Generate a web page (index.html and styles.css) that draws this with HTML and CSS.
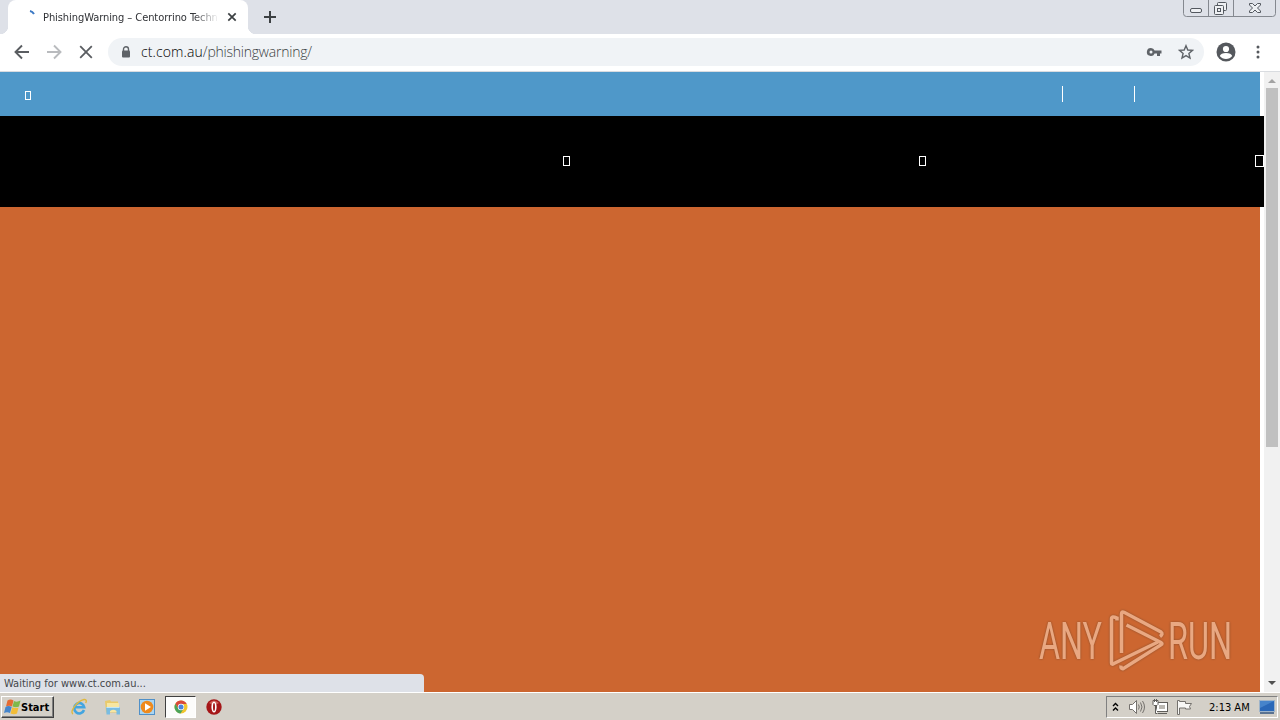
FILE: index.html
```html
<!DOCTYPE html>
<html lang="en">
<head>
  <meta charset="utf-8">
  <title>PhishingWarning – Centorrino Technologies</title>
  <link rel="stylesheet" href="styles.css">
</head>
<body>
  <div class="desktop">

    <div class="tabstrip">
      <div class="prev-tab"></div>
      <div class="tab">
        <svg class="spinner" width="16" height="16" viewBox="0 0 16 16"><path d="M3 3Q5.500 3.500 7 6" fill="none" stroke="#3b78c4" stroke-width="2"/></svg>
        <span class="tab-title">PhishingWarning – Centorrino Techn</span>
        <svg class="tab-close" width="10" height="10" viewBox="0 0 10 10"><path d="M1.300 1.300l7.400 7.400M8.700 1.300L1.300 8.700" stroke="#3c4043" stroke-width="1.700"/></svg>
      </div>
      <svg class="new-tab" width="12" height="12" viewBox="0 0 12 12"><path d="M6 0v12M0 6h12" stroke="#3c4043" stroke-width="2"/></svg>
      <svg class="window-buttons" width="94" height="18" viewBox="0 0 94 18">
        <path d="M.5 0v13.500q0 3 3 3h86q3 0 3-3V0M25.500 0v16.500M50.500 0v16.500" fill="none" stroke="#84888f"/>
        <g fill="#eef0f3" stroke="#53585f">
          <rect x="7.500" y="8.500" width="11" height="4" rx="1.500"/>
          <rect x="34.500" y="2.500" width="9" height="8" rx="1"/>
          <rect x="31.500" y="5.500" width="9" height="9" rx="1"/>
          <rect x="34.500" y="8.500" width="3" height="3"/>
          <path d="M66.500 3.500h3l2.500 2.500 2.500-2.500h3v1.500l-3 3 3 3v1.500h-3L72 10l-2.500 2.500h-3V11l3-3-3-3z"/>
        </g>
      </svg>
    </div>

    <div class="toolbar">
      <svg class="nav-icon" width="16" height="16" viewBox="0 0 16 16"><path d="M15 8H2M8 1.500L1.500 8 8 14.500" fill="none" stroke="#5a5d61" stroke-width="1.900"/></svg>
      <svg class="nav-icon" width="16" height="16" viewBox="0 0 16 16"><path d="M1 8h13M8 1.500L14.500 8 8 14.500" fill="none" stroke="#b9bbbe" stroke-width="1.900"/></svg>
      <svg class="nav-icon" width="16" height="16" viewBox="0 0 16 16"><path d="M2.200 2.200l11.600 11.600M13.800 2.200L2.200 13.800" stroke="#5a5d61" stroke-width="1.800"/></svg>
      <div class="omnibox">
        <svg class="lock" width="10" height="12" viewBox="0 0 10 12"><path d="M2.500 5V3.200a2.500 2.500 0 0 1 5 0V5" fill="none" stroke="#5f6368" stroke-width="1.400"/><rect x="1" y="4.500" width="8" height="7" rx="1" fill="#5f6368"/></svg>
        <span class="url"><span class="url-host">ct.com.au</span>/phishingwarning/</span>
        <svg class="key" width="16" height="10" viewBox="0 0 16 10"><path d="M5 1a4 4 0 1 0 3.600 5.400H11V9h3V6.400h1.500V3.600H8.600A4 4 0 0 0 5 1zm0 2.500a1.500 1.500 0 1 1 0 3 1.500 1.500 0 0 1 0-3z" fill="#5f6368" fill-rule="evenodd"/></svg>
        <svg class="star" width="16" height="16" viewBox="0 0 16 16"><path d="M8 1.700l1.800 4.300 4.700.4-3.600 3.100 1.100 4.600-4-2.500-4 2.500 1.100-4.600-3.600-3.100 4.700-.4z" fill="none" stroke="#5f6368" stroke-width="1.400"/></svg>
      </div>
      <svg class="avatar" width="20" height="20" viewBox="0 0 20 20"><circle cx="10" cy="10" r="9.500" fill="#55585d"/><circle cx="10" cy="7" r="3.100" fill="#fff"/><path d="M3.800 14q1-3 6.200-3t6.200 3q-2.300 3-6.200 3t-6.200-3z" fill="#fff"/></svg>
      <svg class="menu" width="4" height="14" viewBox="0 0 4 14"><g fill="#55585d"><circle cx="2" cy="2" r="1.500"/><circle cx="2" cy="7" r="1.500"/><circle cx="2" cy="12" r="1.500"/></g></svg>
    </div>

    <div class="viewport">
      <div class="page">
        <div class="topbar">
          <i class="glyph"></i>
          <span class="divider"></span>
          <span class="divider"></span>
        </div>
        <div class="nav">
          <i class="glyph"></i>
          <i class="glyph"></i>
          <i class="glyph glyph-wide"></i>
        </div>
        <div class="hero"></div>
      </div>
      <div class="scrollbar">
        <svg width="16" height="16" viewBox="0 0 16 16"><path d="M4 11l4-4 4 4z" fill="#a3a3a3"/></svg>
        <div class="thumb"></div>
        <svg class="scroll-down" width="16" height="16" viewBox="0 0 16 16"><path d="M4 5h8l-4 4z" fill="#505050"/></svg>
      </div>

      <div class="status">Waiting for www.ct.com.au...</div>
      <svg class="watermark" width="245" height="80" viewBox="0 0 245 80">
        <g class="watermark-text">
          <text x="4" y="53" textLength="63" lengthAdjust="spacingAndGlyphs">ANY</text>
          <text x="133" y="53" textLength="64" lengthAdjust="spacingAndGlyphs">RUN</text>
        </g>
        <g class="watermark-mark">
          <path d="M82 14.500V12q-5.500-2.500-5.500 1V57q0 2 2.500.5L123 36"/>
          <path d="M86.500 47V8q0-3 3-1.500L126 26q2.500 2-1 4.500"/>
          <path d="M91.500 19L126 36.500q2 1.200 0 2.200L88.500 62.500q-3 1-2.500-3"/>
        </g>
      </svg>
    </div>

    <div class="taskbar">
      <div class="start">
        <svg width="17" height="16" viewBox="0 0 17 16">
          <path d="M3.500 1.500q3-2 6 0L8 7.500q-3-1.700-6 0z" fill="#e56b32"/>
          <path d="M10 2q3 1.500 6.500-.5L15 7.500q-3 1.500-6.500 0z" fill="#7fb84a"/>
          <path d="M1.500 8q3-2 6.200 0L6 14q-3-1.700-6 0z" fill="#4585cb"/>
          <path d="M8.300 8.300q3 1.500 6.200.2L13 14.500q-3 1.500-6.500 0z" fill="#f2bd38"/>
        </svg>
        <span class="start-label">Start</span>
      </div>
      <div class="quick">
        <svg width="18" height="18" viewBox="0 0 18 18">
          <path d="M14 12A5 5.200 0 1 1 14.200 9.300H5" fill="none" stroke="#43a5e0" stroke-width="2.600"/>
          <path d="M3 16C-1 14 7 3 14 1.500c3-.3 2.500 2 1.700 3.500" fill="none" stroke="#e0b83e" stroke-width="1.400"/>
        </svg>
        <svg width="18" height="18" viewBox="0 0 18 18">
          <path d="M1 3l5-1 1 1.500h7v11H2z" fill="#e9ca6b"/><path d="M3 5h12v9H3z" fill="#f7e6a1"/>
          <path d="M2 9h14v7.500h-3.500V13q-3-2.500-6.500 0v3.500H2.500z" fill="#79bce2"/><path d="M2.500 9.500h13" stroke="#c3e5f5"/>
        </svg>
        <svg width="18" height="18" viewBox="0 0 18 18">
          <rect x="1.500" y="1.500" width="15" height="15" fill="#a9d5f2" stroke="#5090c8"/>
          <circle cx="9" cy="9" r="6.300" fill="#ee8a1d"/><path d="M7 5.300l6 3.700-6 3.700z" fill="#fff"/>
        </svg>
      </div>
      <div class="task-active">
        <svg width="14" height="14" viewBox="0 0 14 14">
          <circle cx="7" cy="7" r="6.500" fill="#f1c52f"/>
          <path d="M1.400 3.700A6.500 6.500 0 0 1 12.700 3.900H7L4.200 8.600z" fill="#d9493a"/>
          <path d="M1.400 3.700A6.500 6.500 0 0 0 6.500 13.500L9.700 8.600 7 10 4.200 8.600z" fill="#4aa35a"/>
          <circle cx="7" cy="7" r="3.200" fill="#fff"/><circle cx="7" cy="7" r="2.500" fill="#4a83dc"/>
        </svg>
      </div>
      <svg class="opera" width="16" height="16" viewBox="0 0 16 16"><circle cx="8" cy="8" r="7.700" fill="#a51618"/><path d="M3 4q5-5 10 0-5 3-10 0z" fill="#cf5b55"/><ellipse cx="8" cy="8" rx="2.600" ry="5.500" fill="#fff"/><ellipse cx="8" cy="8" rx="1" ry="4" fill="#a51618"/></svg>

      <div class="tray">
        <svg class="chevrons" width="7" height="10" viewBox="0 0 7 10"><path d="M1 4l2.500-2.500L6 4M1 8.500L3.500 6 6 8.500" fill="none" stroke="#000" stroke-width="1.400"/></svg>
        <svg width="18" height="16" viewBox="0 0 18 16"><g fill="none" stroke="#74716d"><path d="M1.500 5.500h3l4-4v13l-4-4h-3z" fill="#fff"/><path d="M10.500 5.500q1.500 2.500 0 5M12.500 3.500q3 4.500 0 9M14.500 2q4 6 0 12"/></g></svg>
        <svg width="18" height="16" viewBox="0 0 18 16"><g fill="#fff" stroke="#605e5a"><rect x="4.500" y="3.500" width="11" height="9"/><rect x="7" y="6" width="6" height="4" fill="#bbb8b2" stroke="none"/><path d="M6 14.500h9M3.500 7v7.500h2M1 1.500h5v4l-1 1H2l-1-1zM2.500 0v3M4.500 0v3"/></g></svg>
        <svg width="18" height="16" viewBox="0 0 18 16"><path d="M1.500 15.500V1.500h2v1h6v2h6l-2 3 1 2.500h-5V9h-6v6.500z" fill="#f8f7f5" stroke="#74716d"/></svg>
        <span class="clock">2:13 AM</span>
        <svg class="show-desktop" width="16" height="14" viewBox="0 0 16 14"><rect x=".5" y=".5" width="15" height="11" fill="#2a68b8" stroke="#9eb4ca"/><path d="M1 1h14L1 8z" fill="#4684cb"/><path d="M1 13h14" stroke="#33547f" stroke-width="1.500"/></svg>
      </div>
    </div>

  </div>
</body>
</html>
```
FILE: styles.css
```css
body { margin: 0; }

.desktop {
  display: flex;
  flex-direction: column;
  width: 1280px;
  height: 720px;
  overflow: hidden;
  font-family: "DejaVu Sans Condensed", "DejaVu Sans", sans-serif;
  font-size: 11px;
  color: #000;
}

svg { display: block; flex: none; }


/* Tabs */

.tabstrip {
  display: flex;
  align-items: flex-start;
  height: 34px;
  background: #dee1e8;
}

.prev-tab {
  width: 8px;
  height: 34px;
  background: radial-gradient(circle at 0 26px, #dee1e8 8px, #fff 8.5px);
  clip-path: inset(26px 0 0 0);
}

.tab {
  position: relative;
  display: flex;
  align-items: center;
  box-sizing: border-box;
  width: 240px;
  height: 34px;
  padding: 0 11px 0 19px;
  border-radius: 8px 8px 0 0;
  background: #fff;
}
.tab:after {
  position: absolute;
  right: -8px;
  bottom: 0;
  width: 8px;
  height: 8px;
  background: radial-gradient(circle at 8px 0, #dee1e8 8px, #fff 8.5px);
  content: "";
}

.spinner { margin-top: -2px; }

.tab-title {
  width: 176px;
  overflow: hidden;
  white-space: nowrap;
  letter-spacing: -.07px;
  color: #303236;
  -webkit-mask-image: linear-gradient(to right, #000 150px, transparent);
  mask-image: linear-gradient(to right, #000 150px, transparent);
}

.tab-close { margin-left: 8px; }
.new-tab { margin: 11px 0 0 16px; }
.window-buttons { margin-left: auto; margin-right: 3px; }


/* Address bar */

.toolbar {
  display: flex;
  align-items: center;
  box-sizing: border-box;
  height: 38px;
  padding: 0 20px 1px 14px;
  border-bottom: 1px solid #d9dce0;
  background: #fff;
}

.nav-icon { margin-right: 16px; }

.omnibox {
  display: flex;
  align-items: center;
  box-sizing: border-box;
  width: 1096px;
  height: 28px;
  margin-left: -2px;
  padding: 0 10px 0 13px;
  border-radius: 14px;
  background: #f0f3f6;
}

.url {
  margin: -1px 0 0 10px;
  font-family: "Open Sans", sans-serif;
  font-size: 14px;
  font-weight: 300;
  letter-spacing: -.22px;
  color: #3c3f43;
}
.url-host { letter-spacing: .1px; color: #000; }

.key { margin-left: auto; }
.star { margin-left: 16px; }
.avatar { margin-left: 12px; }
.menu { margin-left: auto; }


/* Page */

.viewport {
  position: relative;
  display: flex;
  height: 620px;
  background: #fff;
}

.page { width: 1264px; }

.topbar {
  display: flex;
  align-items: center;
  box-sizing: border-box;
  width: 1260px;
  height: 44px;
  padding: 0 125px 0 25px;
  background: #4f98c9;
}

.glyph {
  box-sizing: border-box;
  width: 6px;
  height: 9px;
  margin-top: 3px;
  border: 1px solid #fff;
}

.divider {
  width: 1px;
  height: 16px;
  margin-left: 71px;
  background: #fff;
}
.glyph + .divider { margin-left: auto; }

.nav {
  display: flex;
  align-items: center;
  justify-content: flex-end;
  box-sizing: border-box;
  height: 91px;
  padding-bottom: 2px;
  background: #000;
}
.nav .glyph { width: 7px; height: 10px; margin: 0 0 0 349px; }
.nav .glyph-wide { width: 9px; height: 12px; margin-left: 329px; }

.hero {
  width: 1260px;
  height: 485px;
  background: #cc6630;
}

.scrollbar {
  display: flex;
  flex-direction: column;
  align-items: center;
  width: 16px;
  background: #f1f1f1;
}
.thumb { width: 12px; height: 359px; background: #c0c0c0; }
.scroll-down { margin-top: auto; }

.status {
  position: absolute;
  left: 0;
  bottom: 0;
  box-sizing: border-box;
  width: 424px;
  height: 18px;
  padding-left: 4px;
  border-radius: 0 4px 0 0;
  background: #dee1e8;
  line-height: 20px;
  color: #44464a;
}

.watermark {
  position: absolute;
  left: 1035px;
  top: 534px;
  opacity: .85;
  filter: drop-shadow(0 0 1px rgba(90, 60, 40, .7));
}
.watermark-text {
  font-family: Roboto, sans-serif;
  font-size: 51px;
  font-weight: 400;
  fill: #efb491;
}
.watermark-mark { fill: none; stroke: #efb491; stroke-width: 3.5; }


/* Taskbar */

.taskbar {
  display: flex;
  align-items: center;
  box-sizing: border-box;
  height: 28px;
  padding: 0 2px 0 1px;
  border-top: 1px solid #fff;
  background: #d4d0c8;
}

.start {
  display: flex;
  align-items: center;
  box-sizing: border-box;
  width: 53px;
  height: 22px;
  padding-left: 2px;
  border: 1px solid;
  border-color: #fff #404040 #404040 #fff;
  box-shadow: inset -1px -1px #808080;
  font-weight: bold;
}
.start-label { margin-top: 1px; }

.quick { display: flex; gap: 16px; margin-left: 16px; }

.task-active {
  display: flex;
  align-items: center;
  justify-content: center;
  box-sizing: border-box;
  width: 31px;
  height: 22px;
  margin-left: 9px;
  border: 1px solid;
  border-color: #404040 #fff #fff #404040;
  background: #fcfcfb;
}

.opera { margin-left: 10px; }

.tray {
  display: flex;
  align-items: center;
  box-sizing: border-box;
  width: 172px;
  height: 22px;
  margin-left: auto;
  padding-left: 5px;
  border: 1px solid;
  border-color: #808080 #fff #fff #808080;
}
.tray svg { margin-right: 6px; }
.tray .chevrons { margin-right: 9px; }

.clock { margin: 1px 0 0 9px; white-space: nowrap; }
.tray .show-desktop { margin: 0 2px 0 auto; }
```
